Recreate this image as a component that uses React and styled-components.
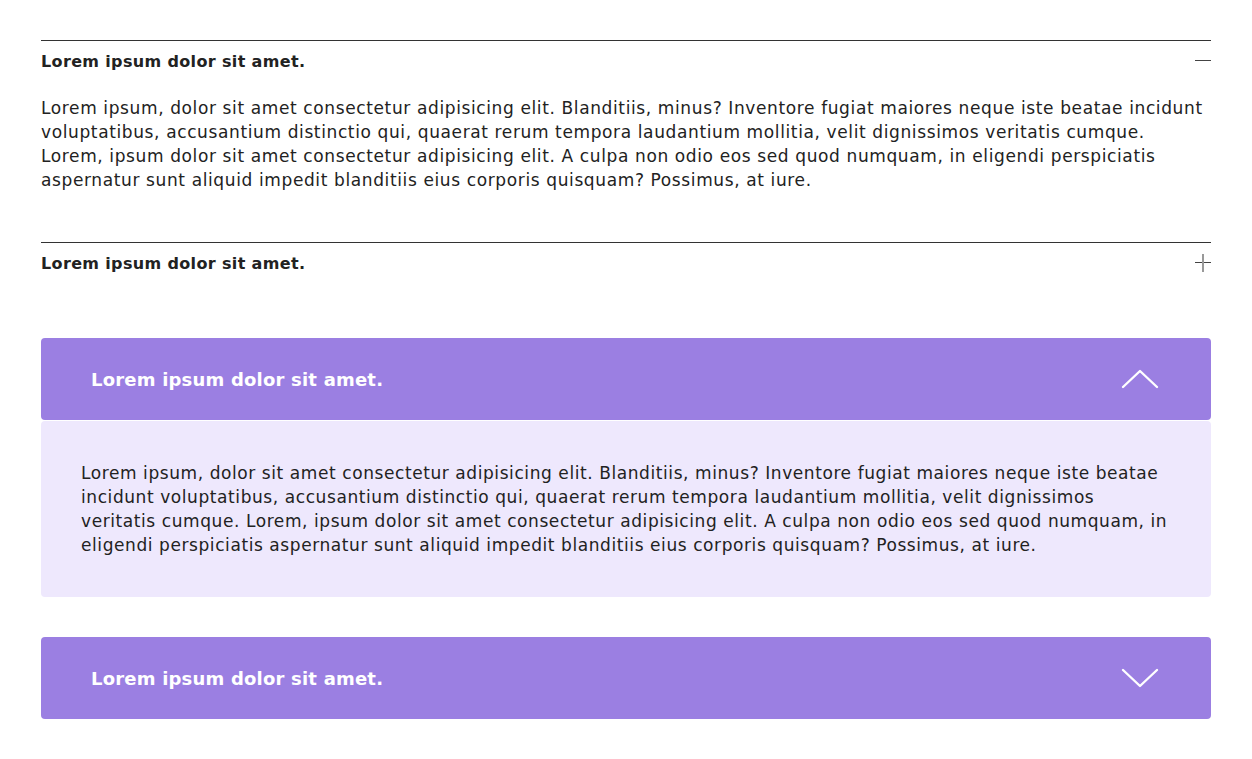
import styled, { createGlobalStyle } from "styled-components";

const GlobalStyle = createGlobalStyle`
	* {
		box-sizing: border-box;
	}
	body {
		margin: 0;
		background: #fff;
		font-family: "DejaVu Sans", "Noto Sans", sans-serif;
		color: #222;
	}
`;

const text =
	"Lorem ipsum, dolor sit amet consectetur adipisicing elit. Blanditiis, minus? Inventore fugiat maiores neque iste beatae incidunt voluptatibus, accusantium distinctio qui, quaerat rerum tempora laudantium mollitia, velit dignissimos veritatis cumque. Lorem, ipsum dolor sit amet consectetur adipisicing elit. A culpa non odio eos sed quod numquam, in eligendi perspiciatis aspernatur sunt aliquid impedit blanditiis eius corporis quisquam? Possimus, at iure.";

function LineItem({ open }) {
	return (
		<StyledLineItem $open={open}>
			<div className='line-header'>
				<h3>Lorem ipsum dolor sit amet.</h3>
				<span className={open ? "toggle minus" : "toggle plus"} />
			</div>
			{open && <p className='line-body'>{text}</p>}
		</StyledLineItem>
	);
}

function CardItem({ open }) {
	return (
		<StyledCardItem>
			<div className='card-header'>
				<h3>Lorem ipsum dolor sit amet.</h3>
				<svg width='38' height='22' viewBox='0 0 38 22' fill='none'>
					<path
						d={open ? "M2 19 L19 3 L36 19" : "M2 3 L19 19 L36 3"}
						stroke='#fff'
						strokeWidth='2.4'
						strokeLinecap='round'
						strokeLinejoin='round'
					/>
				</svg>
			</div>
			{open && <p className='card-body'>{text}</p>}
		</StyledCardItem>
	);
}

export default function App() {
	return (
		<>
			<GlobalStyle />
			<Page>
				<LineItem open />
				<LineItem />
				<CardItem open />
				<CardItem />
			</Page>
		</>
	);
}

const Page = styled.main`
	max-width: 1170px;
	margin: 0 auto;
	padding: 40px 0;
	display: flex;
	flex-direction: column;
`;

const StyledLineItem = styled.section`
	border-top: 1px solid #333;
	padding-bottom: ${(p) => (p.$open ? "50px" : "55px")};

	& .line-header {
		display: flex;
		justify-content: space-between;
		align-items: center;
		height: 40px;

		& h3 {
			margin: 0;
			font-size: 16px;
			font-weight: 700;
			letter-spacing: 0.35px;
			color: #222;
		}
	}

	& .toggle {
		position: relative;
		width: 16px;
		height: 16px;

		&::before,
		&::after {
			content: "";
			position: absolute;
			background: #444;
		}
		&::before {
			left: 0;
			right: 0;
			top: 7px;
			height: 1px;
		}
	}

	& .plus::after {
		top: -1px;
		bottom: -1px;
		left: 7px;
		width: 2px;
		background: #999;
	}

	& .line-body {
		margin: 15px 0 0;
		font-size: 17px;
		line-height: 24px;
		letter-spacing: 0.62px;
	}
`;

const StyledCardItem = styled.section`
	margin-bottom: 40px;

	&:last-child {
		margin-bottom: 0;
	}

	& .card-header {
		height: 82px;
		display: flex;
		align-items: center;
		justify-content: space-between;
		padding: 0 52px 0 50px;
		background-color: #9b7fe2;
		border-radius: 4px;
		color: #fff;

		& h3 {
			margin: 0;
			font-size: 18px;
			font-weight: 700;
			letter-spacing: 0.2px;
		}
	}

	& .card-body {
		margin: 1px 0 0;
		padding: 40px 39px 40px 40px;
		background-color: #eee8fd;
		border-radius: 4px;
		font-size: 17px;
		line-height: 24px;
		letter-spacing: 0.58px;
	}
`;
